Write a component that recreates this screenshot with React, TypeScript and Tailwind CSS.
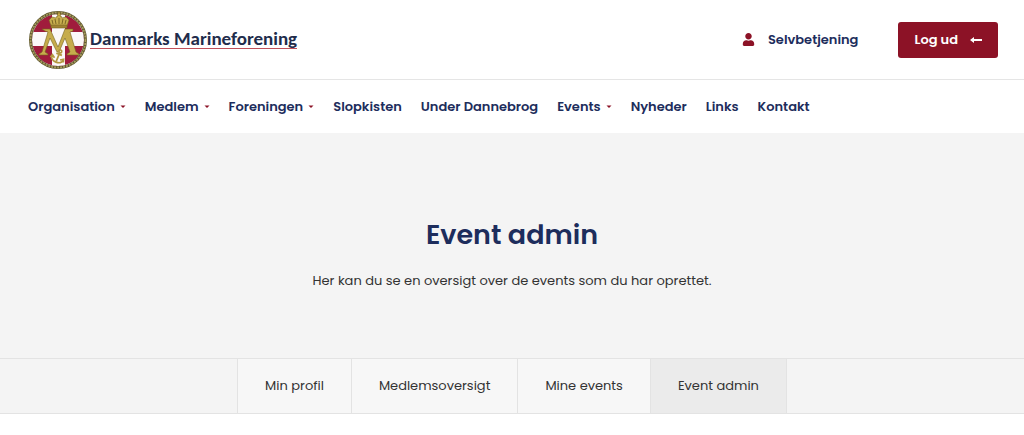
import { FaUser } from "react-icons/fa";

const menuItems = [
  { label: "Organisation", hasSub: true },
  { label: "Medlem", hasSub: true },
  { label: "Foreningen", hasSub: true },
  { label: "Slopkisten", hasSub: false },
  { label: "Under Dannebrog", hasSub: false },
  { label: "Events", hasSub: true },
  { label: "Nyheder", hasSub: false },
  { label: "Links", hasSub: false },
  { label: "Kontakt", hasSub: false },
];

const tabs = ["Min profil", "Medlemsoversigt", "Mine events", "Event admin"];

function Emblem() {
  return (
    <svg viewBox="0 0 60 60" className="size-15 shrink-0" aria-hidden="true">
      <defs>
        <clipPath id="disc">
          <circle cx="30" cy="30" r="26" />
        </clipPath>
      </defs>
      <g clipPath="url(#disc)">
        <rect width="60" height="60" fill="#a01c3c" />
        <path d="M24 0h13v60H24zM0 22h60v14H0z" fill="#fbf8f8" />
      </g>
      <circle cx="30" cy="30" r="27.5" fill="none" stroke="#5d562f" strokeWidth="3" />
      <circle
        cx="30"
        cy="30"
        r="27.5"
        fill="none"
        stroke="#a89b5c"
        strokeWidth="1.8"
        strokeDasharray="2 1"
      />
      {/* monogram */}
      <g stroke="#75631f" strokeWidth="0.6" fill="#c6ac4c">
        <path d="M14 19h8l8 18 7-18h8v2l-3 1 6 20 3 2v1H39v-1l3-2-5-14-6 14h-2l-7-14-5 14 3 2v1h-9v-1l3-2 6-20-3-1z" />
        {/* crown */}
        <path d="M23 16l-2-6 3-3 4 1 1-2h1V5h-1V4h1V2h2v2h1v1h-1v1h1l1 2 4-1 3 3-2 6z" />
        <path d="M23 15h16v3H23z" fill="#a08332" />
      </g>
      <path
        d="M25 14l-1-4M31 14V8M37 14l1-4M28 14l-1-5M34 14l1-5"
        stroke="#725f20"
        strokeWidth="0.9"
        fill="none"
      />
      {/* anchor, tilted to the left */}
      <g fill="none" stroke="#b3973f" strokeWidth="1.7" transform="rotate(22 30 47)">
        <circle cx="30" cy="41" r="1.5" />
        <path d="M30 42.500v9M27 44h6M24 48c0 3 3 4.500 6 4.500s6-1.500 6-4.500M23 50l1-3 3 2M33 49l3-2 1 3" />
      </g>
    </svg>
  );
}

function Caret() {
  return (
    <svg viewBox="0 0 6 4" className="w-[6px] h-[4px]" aria-hidden="true">
      <path d="M0.5 0.5h5L3 3z" fill="#8c1226" />
    </svg>
  );
}

export default function App() {
  return (
    <div className="bg-white text-[#1d2d5c] font-['Poppins','Inter',sans-serif]">
      <header className="border-b border-[#e5e5e5]">
        <div className="flex items-center justify-between pl-7 pr-[26px] h-[79px]">
          <a href="#" className="flex items-center gap-[2px]">
            <Emblem />
            <span className="border-b border-[#c0505a] text-[19px] leading-[18px] font-bold text-[#212c4b] font-['Carlito','Lato',sans-serif]">
              Danmarks Marineforening
            </span>
          </a>

          <div className="flex items-center gap-10">
            <a href="#" className="flex items-center gap-[13px] text-[13px] font-semibold">
              <FaUser className="text-[#8c1226] text-[13px]" />
              Selvbetjening
            </a>
            <button className="flex items-center gap-3 h-9 px-4 rounded-[3px] bg-[#8c1226] text-[13px] font-semibold text-white">
              Log ud
              <svg viewBox="0 0 12 8" className="w-3 h-2" aria-hidden="true">
                <path d="M0 4l4-3v2h8v2H4v2z" fill="currentColor" />
              </svg>
            </button>
          </div>
        </div>
      </header>

      <nav className="flex items-center gap-[19px] px-7 h-[53px]">
        {menuItems.map((item) => (
          <a
            key={item.label}
            href="#"
            className="flex items-center gap-[5px] text-[13px] font-semibold whitespace-nowrap"
          >
            {item.label}
            {item.hasSub && <Caret />}
          </a>
        ))}
      </nav>

      <main>
        <section className="bg-[#f4f4f4] pt-20 pb-[65px] text-center">
          <h1 className="text-[27px] leading-11 font-semibold">Event admin</h1>
          <p className="mt-3 text-[13px] leading-6 text-[#333333]">
            Her kan du se en oversigt over de events som du har oprettet.
          </p>
        </section>

        <div className="flex justify-center bg-[#f4f4f4] border-y border-[#e3e3e3]">
          <div className="flex border-l border-[#e3e3e3]">
            {tabs.map((tab) => (
              <a
                key={tab}
                href="#"
                aria-current={tab === "Event admin" ? "page" : undefined}
                className="px-[27px] py-[15px] border-r border-[#e3e3e3] bg-[#f7f7f7] text-[13px] leading-6 text-[#333333] aria-[current=page]:bg-[#ebebeb]"
              >
                {tab}
              </a>
            ))}
          </div>
        </div>
      </main>
    </div>
  );
}
